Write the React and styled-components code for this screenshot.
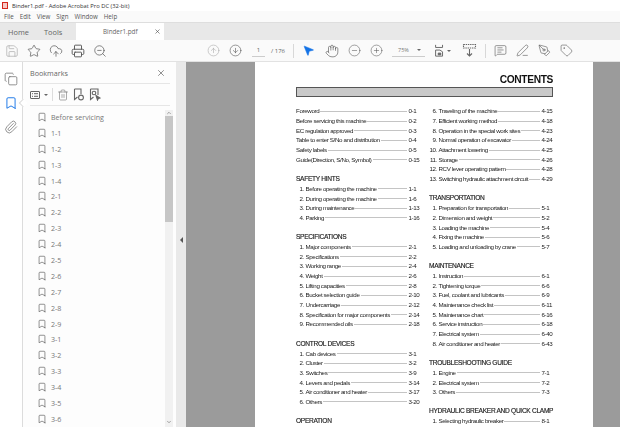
import React from "react";
import styled, { createGlobalStyle } from "styled-components";
import {
  Bookmark,
  ChevronDown,
  ChevronUp,
  CircleArrowDown,
  CircleArrowUp,
  CircleMinus,
  CirclePlus,
  CloudUpload,
  Copy,
  Hand,
  MessageSquareText,
  MousePointer2,
  Paperclip,
  PenLine,
  PenTool,
  Printer,
  Save,
  Star,
  Tag,
  Trash2,
  X,
  ZoomOut,
} from "lucide-react";

const leftColumn = [
  {
    rows: [
      ["", "Foreword", "0-1"],
      ["", "Before servicing this machine", "0-2"],
      ["", "EC regulation approved", "0-3"],
      ["", "Table to enter S/No and distribution", "0-4"],
      ["", "Safety labels", "0-5"],
      ["", "Guide(Direction, S/No, Symbol)", "0-15"],
    ],
  },
  {
    title: "SAFETY HINTS",
    rows: [
      ["1.", "Before operating the machine", "1-1"],
      ["2.", "During operating the machine", "1-6"],
      ["3.", "During maintenance", "1-13"],
      ["4.", "Parking", "1-16"],
    ],
  },
  {
    title: "SPECIFICATIONS",
    rows: [
      ["1.", "Major components", "2-1"],
      ["2.", "Specifications", "2-2"],
      ["3.", "Working range", "2-4"],
      ["4.", "Weight", "2-6"],
      ["5.", "Lifting capacities", "2-8"],
      ["6.", "Bucket selection guide", "2-10"],
      ["7.", "Undercarriage", "2-12"],
      ["8.", "Specification for major components", "2-14"],
      ["9.", "Recommended oils", "2-18"],
    ],
  },
  {
    title: "CONTROL DEVICES",
    rows: [
      ["1.", "Cab devices", "3-1"],
      ["2.", "Cluster", "3-2"],
      ["3.", "Switches", "3-9"],
      ["4.", "Levers and pedals", "3-14"],
      ["5.", "Air conditioner and heater", "3-17"],
      ["6.", "Others", "3-20"],
    ],
  },
  { title: "OPERATION", rows: [] },
];

const rightColumn = [
  {
    rows: [
      ["6.", "Traveling of the machine", "4-15"],
      ["7.", "Efficient working method", "4-18"],
      ["8.", "Operation in the special work sites", "4-23"],
      ["9.", "Normal operation of excavator", "4-24"],
      ["10.", "Attachment lowering", "4-25"],
      ["11.", "Storage", "4-26"],
      ["12.", "RCV lever operating pattern", "4-28"],
      ["13.", "Switching hydraulic attachment circuit", "4-29"],
    ],
  },
  {
    title: "TRANSPORTATION",
    rows: [
      ["1.", "Preparation for transportation", "5-1"],
      ["2.", "Dimension and weight", "5-2"],
      ["3.", "Loading the machine", "5-4"],
      ["4.", "Fixing the machine", "5-6"],
      ["5.", "Loading and unloading by crane", "5-7"],
    ],
  },
  {
    title: "MAINTENANCE",
    rows: [
      ["1.", "Instruction", "6-1"],
      ["2.", "Tightening torque", "6-6"],
      ["3.", "Fuel, coolant and lubricants", "6-9"],
      ["4.", "Maintenance check list", "6-11"],
      ["5.", "Maintenance chart", "6-16"],
      ["6.", "Service instruction", "6-18"],
      ["7.", "Electrical system", "6-40"],
      ["8.", "Air conditioner and heater", "6-43"],
    ],
  },
  {
    title: "TROUBLESHOOTING GUIDE",
    rows: [
      ["1.", "Engine", "7-1"],
      ["2.", "Electrical system", "7-2"],
      ["3.", "Others", "7-3"],
    ],
  },
  {
    title: "HYDRAULIC BREAKER AND QUICK CLAMP",
    rows: [["1.", "Selecting hydraulic breaker", "8-1"]],
  },
];

const bookmarks = [
  "Before servicing",
  "1-1", "1-2", "1-3", "1-4",
  "2-1", "2-2", "2-3", "2-4", "2-5", "2-6", "2-7", "2-8", "2-9",
  "3-1", "3-2", "3-3", "3-4", "3-5", "3-6",
];

const TocColumn = ({ groups }) => (
  <Column>
    {groups.map((group, i) => (
      <TocGroup key={i}>
        {group.title && <TocTitle>{group.title}</TocTitle>}
        {group.rows.map(([num, label, page]) => (
          <TocRow key={label}>
            {num && <TocNum>{num}</TocNum>}
            <span>{label}</span>
            <Leader />
            <TocPage>{page}</TocPage>
          </TocRow>
        ))}
      </TocGroup>
    ))}
  </Column>
);

const FitIcon = () => (
  <svg width="15" height="15" viewBox="0 0 15 15" fill="none" stroke="#666" strokeWidth="1.1">
    <path d="M3 1v3h8V1M3 14V7h5l3 2v5H3z" />
    <path d="M6 10.5h3v2H6z" fill="#666" />
  </svg>
);

const MarqueeIcon = () => (
  <svg width="15" height="15" viewBox="0 0 15 15" fill="none" stroke="#666" strokeWidth="1.1">
    <path d="M1.5 1.5h12v3.5h-12z" strokeDasharray="1.4 .8" />
    <path d="M7.5 6v7M5 10.5l2.5 2.5 2.5-2.5" />
  </svg>
);

const ListIcon = () => (
  <svg width="10" height="8" viewBox="0 0 10 8" fill="none" stroke="#666" strokeWidth="1">
    <rect x=".5" y=".5" width="9" height="7" rx=".5" />
    <path d="M2 2.7h1M2 5.3h1M4 2.7h4M4 5.3h4" />
  </svg>
);

const NewBookmarkIcon = () => (
  <svg width="12" height="13" viewBox="0 0 12 13" fill="none" stroke="#666" strokeWidth="1.1">
    <path d="M1.5 1h6.5v5M1.5 1v10.5l3-2.5" />
    <circle cx="8" cy="9.5" r="2.4" />
  </svg>
);

const SearchBookmarkIcon = () => (
  <svg width="12" height="13" viewBox="0 0 12 13" fill="none" stroke="#666" strokeWidth="1.1">
    <path d="M1.5 1h7.5v6M1.5 1v10.5l3-2.5" />
    <circle cx="5" cy="5" r="1.8" />
    <path d="M7 7.5l4 2.5-1.7.5-.8 1.6z" fill="#666" />
  </svg>
);

const App = () => (
  <Window>
    <GlobalStyle />
    <TitleBar>
      <PdfBadge />
      Binder1.pdf - Adobe Acrobat Pro DC (32-bit)
    </TitleBar>
    <MenuBar>
      {["File", "Edit", "View", "Sign", "Window", "Help"].map((m) => (
        <span key={m}>{m}</span>
      ))}
    </MenuBar>
    <TabBar>
      <TabLink>Home</TabLink>
      <TabLink>Tools</TabLink>
      <ActiveTab>
        <span>Binder1.pdf</span>
        <X size={7} strokeWidth={2} color="#444" />
      </ActiveTab>
    </TabBar>
    <Toolbar>
      <ToolBtn $muted><Save size={14} strokeWidth={1.2} /></ToolBtn>
      <ToolBtn><Star size={14} strokeWidth={1.2} /></ToolBtn>
      <ToolBtn><CloudUpload size={14} strokeWidth={1.2} /></ToolBtn>
      <ToolBtn><Printer size={14} strokeWidth={1.6} /></ToolBtn>
      <ToolBtn><ZoomOut size={14} strokeWidth={1.2} /></ToolBtn>
      <NavGroup>
        <ToolBtn $muted><CircleArrowUp size={13} strokeWidth={1.1} /></ToolBtn>
        <ToolBtn><CircleArrowDown size={13} strokeWidth={1.1} /></ToolBtn>
        <PageBox>1</PageBox>
        <PageTotal>/ 176</PageTotal>
      </NavGroup>
      <Separator />
      <ToolBtn $blue><MousePointer2 size={13} fill="#1473e6" strokeWidth={1} /></ToolBtn>
      <HandGroup>
        <ToolBtn><Hand size={14} strokeWidth={1.1} /></ToolBtn>
        <ToolBtn><CircleMinus size={13} strokeWidth={1} /></ToolBtn>
        <ToolBtn><CirclePlus size={13} strokeWidth={1} /></ToolBtn>
      </HandGroup>
      <ZoomBox>
        75%
        <Caret />
      </ZoomBox>
      <FitBtn><FitIcon /><Caret /></FitBtn>
      <MarqueeBtn><MarqueeIcon /></MarqueeBtn>
      <Separator $wide />
      <ToolBtn><MessageSquareText size={13} strokeWidth={1.1} /></ToolBtn>
      <ToolBtn><PenLine size={13} strokeWidth={1.1} /></ToolBtn>
      <ToolBtn><PenTool size={13} strokeWidth={1.1} /></ToolBtn>
      <ToolBtn><Tag size={13} strokeWidth={1.1} /></ToolBtn>
    </Toolbar>
    <Main>
      <Rail>
        <RailBtn><Copy size={14} strokeWidth={1.2} /></RailBtn>
        <RailBtn $active><Bookmark size={14} strokeWidth={1.6} /></RailBtn>
        <RailBtn><Paperclip size={14} strokeWidth={1.2} /></RailBtn>
      </Rail>
      <Panel>
        <PanelHead>
          Bookmarks
          <X size={10} strokeWidth={1.4} color="#444" />
        </PanelHead>
        <PanelTools>
          <ListIcon />
          <Caret />
          <ToolDivider />
          <Trash2 size={12} strokeWidth={1.1} />
          <NewBookmarkIcon />
          <SearchBookmarkIcon />
        </PanelTools>
        <PanelBody>
          <BookmarkList>
            {bookmarks.map((b) => (
              <BookmarkRow key={b}>
                <Bookmark size={10} strokeWidth={1.7} />
                {b}
              </BookmarkRow>
            ))}
          </BookmarkList>
          <Scroll>
            <ChevronUp size={6} strokeWidth={2} />
            <Thumb />
            <ScrollEnd><ChevronDown size={6} strokeWidth={2} /></ScrollEnd>
          </Scroll>
        </PanelBody>
      </Panel>
      <Gutter><GutterArrow /></Gutter>
      <Viewer>
        <Page>
          <Heading>CONTENTS</Heading>
          <HeadingBar />
          <Columns>
            <TocColumn groups={leftColumn} />
            <TocColumn groups={rightColumn} />
          </Columns>
        </Page>
      </Viewer>
    </Main>
  </Window>
);

export default App;

const GlobalStyle = createGlobalStyle`
  html, body {
    margin: 0;
    padding: 0;
    background: #fff;
    overflow: hidden;
  }
`;

const Window = styled.div`
  width: 620px;
  height: 427px;
  display: flex;
  flex-direction: column;
  overflow: hidden;
  font-family: "Open Sans", sans-serif;
  color: #555;
`;

const TitleBar = styled.div`
  height: 11px;
  display: flex;
  align-items: center;
  gap: 4px;
  padding-left: 2px;
  font-size: 5.8px;
  color: #333;
  background: #fff;
`;

const PdfBadge = styled.div`
  width: 6px;
  height: 7px;
  border: 1px solid #d4261c;
  box-sizing: border-box;
  background: #f7c9c5;
`;

const MenuBar = styled.div`
  height: 11px;
  display: flex;
  align-items: center;
  gap: 6px;
  padding-left: 4px;
  font-size: 6.2px;
  color: #555;
  background: #fafafa;
`;

const TabBar = styled.div`
  height: 18px;
  display: flex;
  align-items: stretch;
  background: #e8e8e8;
  border-top: 1px solid #dedede;
  box-sizing: border-box;
`;

const TabLink = styled.div`
  display: flex;
  align-items: center;
  font-size: 7.4px;
  color: #666;
  margin-left: 8px;
  width: 28px;
`;

const ActiveTab = styled.div`
  width: 88px;
  margin-left: 4px;
  background: #fff;
  display: flex;
  align-items: center;
  justify-content: space-between;
  padding: 0 3px 0 27px;
  box-sizing: border-box;
  font-size: 6.3px;
  color: #666;
`;

const Toolbar = styled.div`
  height: 22px;
  display: flex;
  align-items: center;
  padding-left: 1px;
  background: #fafafa;
  border-bottom: 1px solid #e2e2e2;
  box-sizing: border-box;
  flex-shrink: 0;
`;

const ToolBtn = styled.div`
  width: 22px;
  height: 20px;
  display: flex;
  align-items: center;
  justify-content: center;
  color: ${(p) => (p.$blue ? "#1473e6" : p.$muted ? "#aaa" : "#555")};
  flex-shrink: 0;
`;

const NavGroup = styled.div`
  display: flex;
  align-items: center;
  margin-left: 91px;
`;

const HandGroup = styled.div`
  display: flex;
  margin-left: 2px;
`;

const PageBox = styled.div`
  width: 13px;
  height: 11px;
  margin-left: 6px;
  text-align: center;
  font-size: 6px;
  line-height: 11px;
  color: #666;
  border-bottom: 1px solid #ccc;
`;

const PageTotal = styled.div`
  margin-left: 6px;
  width: 20px;
  font-size: 6px;
  color: #666;
`;

const Separator = styled.div`
  width: 1px;
  height: 14px;
  background: #d8d8d8;
  margin: ${(p) => (p.$wide ? "0 3px 0 5px" : "0 3px 0 2px")};
`;

const ZoomBox = styled.div`
  width: 33px;
  height: 12px;
  margin-left: 5px;
  padding-left: 6px;
  display: flex;
  align-items: center;
  justify-content: space-between;
  padding-right: 4px;
  box-sizing: border-box;
  font-size: 5.5px;
  color: #777;
  border-bottom: 1px solid #ccc;
`;

const Caret = styled.span`
  width: 0;
  height: 0;
  border-left: 2px solid transparent;
  border-right: 2px solid transparent;
  border-top: 2px solid #666;
`;

const FitBtn = styled.div`
  width: 20px;
  margin-left: 6px;
  display: flex;
  align-items: center;
  gap: 1px;
  padding-left: 2px;
  box-sizing: border-box;
`;

const MarqueeBtn = styled.div`
  width: 22px;
  margin-left: 7px;
  display: flex;
  justify-content: center;
`;

const Main = styled.div`
  flex: 1;
  min-height: 0;
  display: flex;
`;

const Rail = styled.div`
  width: 23px;
  display: flex;
  flex-direction: column;
  align-items: center;
  gap: 8px;
  padding-top: 9px;
  box-sizing: border-box;
  background: #fff;
  border-right: 1px solid #dcdcdc;
`;

const RailBtn = styled.div`
  position: relative;
  height: 16px;
  display: flex;
  align-items: center;
  color: ${(p) => (p.$active ? "#1473e6" : "#666")};

  ${(p) =>
    p.$active &&
    `&::after {
      content: "";
      position: absolute;
      left: 16px;
      top: 5px;
      width: 5px;
      height: 5px;
      background: #fff;
      border-left: 1px solid #dcdcdc;
      border-bottom: 1px solid #dcdcdc;
      transform: rotate(45deg);
    }`}
`;

const Panel = styled.div`
  width: 153px;
  padding-left: 7px;
  display: flex;
  flex-direction: column;
  box-sizing: border-box;
  background: #fdfdfd;
`;

const PanelHead = styled.div`
  height: 21px;
  margin-right: 6px;
  display: flex;
  align-items: center;
  justify-content: space-between;
  padding-right: 4px;
  font-size: 7.2px;
  color: #666;
  border-bottom: 1px solid #e6e6e6;
`;

const PanelTools = styled.div`
  height: 21px;
  margin-right: 6px;
  display: flex;
  align-items: center;
  gap: 4px;
  color: #666;
  border-bottom: 1px solid #e6e6e6;
`;

const ToolDivider = styled.div`
  width: 1px;
  height: 13px;
  background: #ddd;
`;

const PanelBody = styled.div`
  flex: 1;
  min-height: 0;
  display: flex;
`;

const BookmarkList = styled.div`
  flex: 1;
  padding: 3px 0 0 7px;
  overflow: hidden;
`;

const BookmarkRow = styled.div`
  height: 15.9px;
  display: flex;
  align-items: center;
  gap: 4px;
  font-size: 7.1px;
  color: #777;
  svg {
    color: #666;
  }
`;

const Scroll = styled.div`
  width: 8px;
  margin-right: 3px;
  margin-top: 4px;
  display: flex;
  flex-direction: column;
  align-items: center;
  color: #555;
  background: #f1f1f1;
`;

const Thumb = styled.div`
  width: 100%;
  height: 106px;
  background: #c6c6c6;
`;

const ScrollEnd = styled.div`
  margin-top: auto;
  padding-bottom: 2px;
  line-height: 0;
`;

const Gutter = styled.div`
  width: 10px;
  display: flex;
  align-items: center;
  justify-content: center;
  background: #e9e9e9;
`;

const GutterArrow = styled.span`
  margin-top: -9px;
  border-top: 3px solid transparent;
  border-bottom: 3px solid transparent;
  border-right: 3px solid #555;
`;

const Viewer = styled.div`
  flex: 1;
  min-width: 0;
  display: flex;
  padding-left: 69px;
  background: #9b9b9b;
  overflow: hidden;
`;

const Page = styled.div`
  width: 338px;
  height: 100%;
  padding: 11px 40px 0 41px;
  box-sizing: border-box;
  background: #fff;
  font-family: "Liberation Sans", Arial, sans-serif;
  color: #222;
  overflow: hidden;
  filter: blur(0.25px);
`;

const Heading = styled.div`
  font-size: 10.2px;
  line-height: 14px;
  font-weight: bold;
  text-align: right;
  letter-spacing: -0.35px;
  color: #111;
`;

const HeadingBar = styled.div`
  height: 10px;
  box-sizing: border-box;
  background: #c9c9c9;
  border: 1px solid #555;
`;

const Columns = styled.div`
  display: grid;
  grid-template-columns: 124px 124px;
  column-gap: 9px;
  margin-top: 9px;
`;

const Column = styled.div`
  display: flex;
  flex-direction: column;
  min-width: 0;
`;

const TocGroup = styled.div`
  margin-bottom: 9.69px;
`;

const TocTitle = styled.div`
  height: 9.69px;
  line-height: 9.69px;
  font-size: 6.6px;
  white-space: nowrap;
  letter-spacing: -0.3px;
  -webkit-text-stroke: 0.15px #222;
  color: #222;
`;

const TocRow = styled.div`
  height: 9.69px;
  display: flex;
  align-items: center;
  font-size: 6.2px;
  letter-spacing: -0.36px;
  white-space: nowrap;
  color: #222;
`;

const TocNum = styled.span`
  width: 8px;
  margin-right: 1.5px;
  text-align: right;
  flex-shrink: 0;
`;

const Leader = styled.span`
  flex: 1;
  height: 0;
  margin: 1px 2px 0 1px;
  border-bottom: 1px solid #c4c4c4;
`;

const TocPage = styled.span`
  width: 11.5px;
  flex-shrink: 0;
`;
